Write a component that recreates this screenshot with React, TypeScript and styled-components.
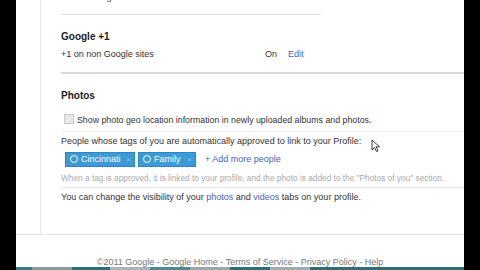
import React from "react";
import styled, { createGlobalStyle } from "styled-components";

const Global = createGlobalStyle`
  html, body { margin: 0; padding: 0; background: #000; }
  body { font-family: "Liberation Sans", Arial, sans-serif; }
`;

const Screen = styled.div`
  width: 480px;
  height: 270px;
  display: flex;
  background: #000;
  overflow: hidden;
`;

const SideBar = styled.div`
  width: 16px;
  flex: none;
  background: #000;
`;

const Page = styled.div`
  width: 448px;
  flex: none;
  background: #fff;
  display: flex;
  flex-direction: column;
  overflow: hidden;
`;

const Body = styled.div`
  height: 235px;
  flex: none;
  display: flex;
  border-bottom: 1px solid #e4e4e4;
  box-sizing: border-box;
`;

const Gutter = styled.div`
  width: 24px;
  flex: none;
  border-right: 1px solid #e8e8e8;
`;

const Panel = styled.div`
  flex: 1;
  padding-left: 20px;
  display: flex;
  flex-direction: column;
  color: #333;
  font-size: 9px;
  overflow: hidden;
`;

const Row = styled.div<{ $h: number; $w?: number; $line?: string; $thick?: boolean; $pb?: number }>`
  height: ${(p) => p.$h}px;
  width: ${(p) => (p.$w ? `${p.$w}px` : "auto")};
  display: flex;
  align-items: ${(p) => (p.$pb !== undefined ? "flex-end" : "center")};
  padding-bottom: ${(p) => p.$pb ?? 0}px;
  flex: none;
  box-sizing: border-box;
  border-bottom: ${(p) => (p.$line ? `${p.$thick ? 2 : 1}px solid ${p.$line}` : "none")};
`;

const TopCut = styled(Row)`
  margin-top: -11px;
  align-items: flex-start;
  padding-top: 3px;
`;

const Heading = styled.div<{ $h: number }>`
  height: ${(p) => p.$h}px;
  flex: none;
  display: flex;
  align-items: flex-end;
  font-weight: bold;
  font-size: 10px;
  color: #222;
`;

const Label = styled.span<{ $w?: number; $size?: number }>`
  width: ${(p) => (p.$w ? `${p.$w}px` : "auto")};
  font-size: ${(p) => (p.$size ? `${p.$size}px` : "inherit")};
  flex: none;
  white-space: nowrap;
`;

const Link = styled.a`
  color: #4466bb;
  text-decoration: none;
`;

const Check = styled.span`
  width: 8px;
  height: 8px;
  border: 1px solid #c8c8c8;
  background: #e8e8e8;
  margin: 0 3px 1px 3px;
  flex: none;
`;

const Chips = styled.div`
  display: flex;
  align-items: center;
  gap: 3px;
  padding-left: 4px;
`;

const Chip = styled.span<{ $w: number }>`
  width: ${(p) => p.$w}px;
  height: 15px;
  box-sizing: border-box;
  background: #3c9ad6;
  border: 1px solid #2f86c2;
  color: #fff;
  display: flex;
  align-items: center;
  padding-left: 4px;
  gap: 3px;
  font-size: 9px;
`;

const Ring = styled.span`
  width: 6px;
  height: 6px;
  border: 1.5px solid #fff;
  border-radius: 50%;
  flex: none;
`;

const Close = styled.span`
  margin-left: auto;
  margin-right: 3px;
  color: #8cc6ec;
  font-size: 8px;
`;

const AddMore = styled.span`
  margin-left: 6px;
  color: #4466bb;
  font-size: 9px;
`;

const Hint = styled.span`
  color: #aaa;
  font-size: 8.3px;
  white-space: nowrap;
`;

const Footer = styled.div`
  height: 32px;
  flex: none;
  display: flex;
  align-items: flex-end;
  justify-content: center;
  font-size: 9px;
  color: #777;
  line-height: 10px;
  white-space: nowrap;
`;

const Taskbar = styled.div`
  height: 3px;
  flex: none;
  display: flex;
  background: #2f6f73;
`;

const Seg = styled.span<{ $w: number; $c: string }>`
  width: ${(p) => p.$w}px;
  background: ${(p) => p.$c};
  flex: none;
`;

const Cursor = styled.svg`
  margin-left: 10px;
  margin-top: 8px;
  flex: none;
`;

export default function App() {
  return (
    <>
      <Global />
      <Screen>
        <SideBar />
        <Page>
          <Body>
            <Gutter />
            <Panel>
              <TopCut $h={26} $w={260} $line="#e2e2e2">
                <Label $w={221}>Start a Hangout conversation with me</Label>
                <Label>Yes</Label>
              </TopCut>
              <Heading $h={27}>Google +1</Heading>
              <Row $h={24}>
                <Label $w={204}>+1 on non Google sites</Label>
                <Label $w={23}>On</Label>
                <Link>Edit</Link>
              </Row>
              <Row $h={8} $line="#dadada" $thick />
              <Heading $h={27}>Photos</Heading>
              <Row $h={31} $line="#efefef" $pb={6}>
                <Check />
                <Label $size={8.8}>Show photo geo location information in newly uploaded albums and photos.</Label>
              </Row>
              <Row $h={18}>
                <Label>People whose tags of you are automatically approved to link to your Profile:</Label>
                <Cursor width="9" height="13" viewBox="0 0 9 13">
                  <path d="M1 1 L1 11 L3.5 8.5 L5.5 12.5 L7 11.8 L5 7.8 L8.5 7.8 Z" fill="#fff" stroke="#222" strokeWidth="0.9" />
                </Cursor>
              </Row>
              <Row $h={18}>
                <Chips>
                  <Chip $w={70}>
                    <Ring />
                    Cincinnati
                    <Close>×</Close>
                  </Chip>
                  <Chip $w={58}>
                    <Ring />
                    Family
                    <Close>×</Close>
                  </Chip>
                  <AddMore>+ Add more people</AddMore>
                </Chips>
              </Row>
              <Row $h={20} $line="#e6e6e6">
                <Hint>When a tag is approved, it is linked to your profile, and the photo is added to the "Photos of you" section.</Hint>
              </Row>
              <Row $h={18}>
                <Label>
                  You can change the visibility of your <Link>photos</Link> and <Link>videos</Link> tabs on your profile.
                </Label>
              </Row>
            </Panel>
          </Body>
          <Footer>©2011 Google - Google Home - Terms of Service - Privacy Policy - Help</Footer>
          <Taskbar>
            <Seg $w={16} $c="#3b7d86" />
            <Seg $w={40} $c="#8a9aa0" />
            <Seg $w={38} $c="#2c6e78" />
            <Seg $w={40} $c="#a8b4b8" />
            <Seg $w={40} $c="#4d8a90" />
            <Seg $w={40} $c="#9aa8ac" />
            <Seg $w={40} $c="#2e6f78" />
            <Seg $w={40} $c="#a0acb0" />
            <Seg $w={154} $c="#2f6f73" />
          </Taskbar>
        </Page>
        <SideBar />
      </Screen>
    </>
  );
}
